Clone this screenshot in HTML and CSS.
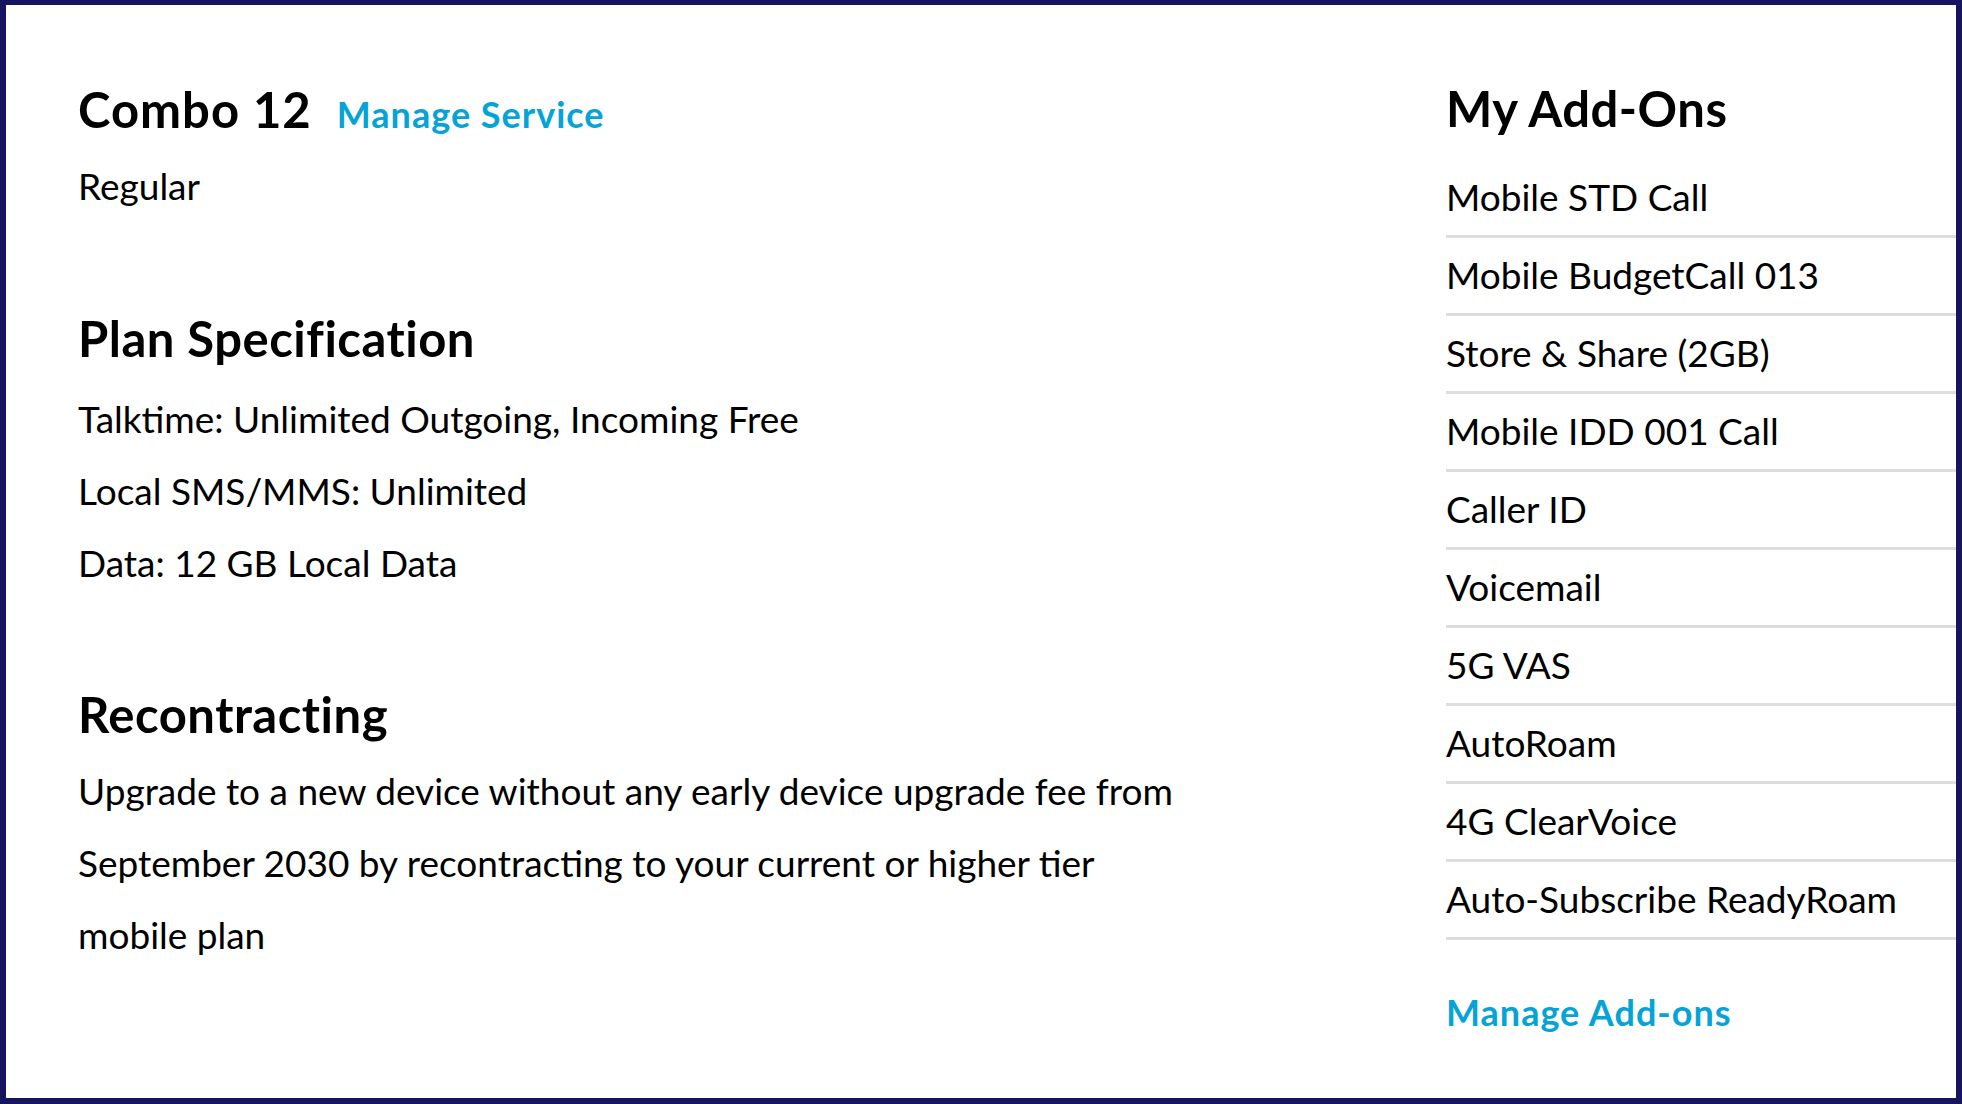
FILE: index.html
```html
<!DOCTYPE html>
<html lang="en">
<head>
  <meta charset="UTF-8">
  <title>My Plan</title>
  <link rel="stylesheet" href="styles.css">
</head>
<body>
  <main class="frame">
    <!-- Plan details -->
    <section class="plan">
      <div class="plan-title">
        <h1>Combo 12</h1>
        <a href="#" class="link">Manage Service</a>
      </div>
      <p class="plan-type">Regular</p>

      <h2 class="spec-title">Plan Specification</h2>
      <ul class="spec-list">
        <li>Talktime: Unlimited Outgoing, Incoming Free</li>
        <li>Local SMS/MMS: Unlimited</li>
        <li>Data: 12 GB Local Data</li>
      </ul>

      <h2 class="recon-title">Recontracting</h2>
      <p class="recon-text">Upgrade to a new device without any early device upgrade fee from September 2030 by recontracting to your current or higher tier mobile plan</p>
    </section>

    <!-- Add-ons -->
    <aside class="addons">
      <h2>My Add-Ons</h2>
      <ul class="addon-list">
        <li>Mobile STD Call</li>
        <li>Mobile BudgetCall 013</li>
        <li>Store &amp; Share (2GB)</li>
        <li>Mobile IDD 001 Call</li>
        <li>Caller ID</li>
        <li>Voicemail</li>
        <li>5G VAS</li>
        <li>AutoRoam</li>
        <li>4G ClearVoice</li>
        <li>Auto-Subscribe ReadyRoam</li>
      </ul>
      <a href="#" class="link addons-link">Manage Add-ons</a>
    </aside>
  </main>
</body>
</html>
```

FILE: styles.css
```css
body {
  margin: 0;
  font-family: Lato, 'Open Sans', sans-serif;
  color: #000;
  background: #fff;
}

.frame {
  display: flex;
  height: 1104px;
  box-sizing: border-box;
  border: 6px solid #17155f;
  border-top-width: 5px;
}

h1, h2 {
  margin: 0;
  font-size: 49px;
  font-weight: 700;
  line-height: 60px;
  letter-spacing: 0.5px;
}

h1 {
  letter-spacing: 1px;
}

ul {
  list-style: none;
  margin: 0;
  padding: 0;
}

p {
  margin: 0;
}

.link {
  color: #05a3d6;
  font-weight: 700;
  font-size: 36px;
  letter-spacing: 1px;
  text-decoration: none;
}

/* Left column */
.plan {
  flex: 1;
  padding: 73px 0 0 72px;
  font-size: 37px;
  line-height: 72px;
}

.plan-title {
  display: flex;
  align-items: baseline;
  gap: 25px;
}

.plan-type {
  margin-top: 0;
}

.spec-title {
  margin-top: 86px;
}

.spec-list {
  margin-top: 15px;
}

.recon-title {
  margin-top: 85px;
}

.recon-text {
  margin-top: 11px;
  max-width: 1110px;
}

/* Right column */
.addons {
  width: 510px;
  padding-top: 73px;
  font-size: 37px;
}

.addon-list {
  margin-top: 22px;
}

.addon-list li {
  line-height: 60px;
  padding: 7px 0 8px;
  border-bottom: 3px solid #dddddd;
}

.addons-link {
  display: inline-block;
  margin-top: 47px;
  line-height: 50px;
}
```
